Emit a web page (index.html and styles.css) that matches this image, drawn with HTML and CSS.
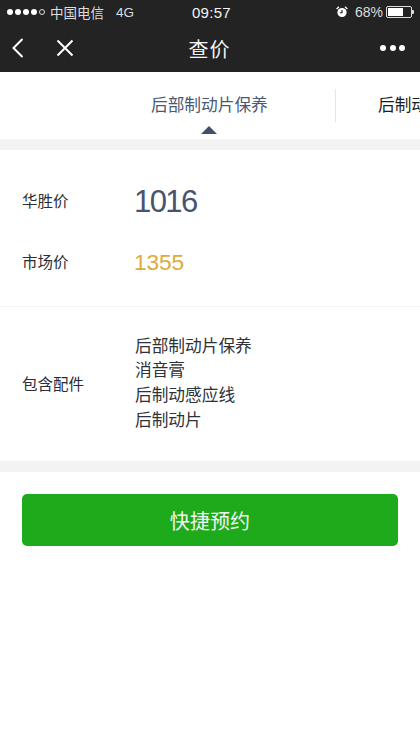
FILE: index.html
```html
<!DOCTYPE html>
<html lang="zh-CN">
<head>
<meta charset="utf-8">
<title>查价</title>
<link rel="stylesheet" href="styles.css">
</head>
<body>
<header class="top">
  <div class="status">
    <div class="status-left">
      <span class="signal"><i></i><i></i><i></i><i></i><i class="off"></i></span>
      <span class="carrier">中国电信</span>
      <span class="net">4G</span>
    </div>
    <div class="time">09:57</div>
    <div class="status-right">
      <svg class="alarm" width="12" height="12" viewBox="0 0 12 12"><circle cx="6" cy="6.5" r="4.6" fill="#fff"/><path d="M6 4v2.8H3.8" fill="none" stroke="#222" stroke-width="1.1"/><path d="M0.6 3 L3 0.8 M11.4 3 L9 0.8" stroke="#fff" stroke-width="1.3"/></svg>
      <span class="pct">68%</span>
      <span class="battery"><span class="battery-fill"></span></span><span class="battery-tip"></span>
    </div>
  </div>
  <nav class="nav">
    <div class="nav-left">
      <svg width="14" height="22" viewBox="0 0 14 22"><path d="M11.5 2 L2.5 11 L11.5 20" fill="none" stroke="#fff" stroke-width="2"/></svg>
      <svg width="20" height="20" viewBox="0 0 20 20"><path d="M2.5 2.5 L17.5 17.5 M17.5 2.5 L2.5 17.5" fill="none" stroke="#fff" stroke-width="2"/></svg>
    </div>
    <div class="nav-title">查价</div>
    <div class="dots"><i></i><i></i><i></i></div>
  </nav>
</header>
<div class="tabs">
  <div class="tab tab-active">后部制动片保养<span class="caret"></span></div>
  <div class="tab tab-next">后制动片</div>
</div>
<section class="prices">
  <div class="row"><div class="label">华胜价</div><div class="sale">1016</div></div>
  <div class="row"><div class="label">市场价</div><div class="market">1355</div></div>
</section>
<section class="parts">
  <div class="label">包含配件</div>
  <ul class="part-list">
    <li>后部制动片保养</li>
    <li>消音膏</li>
    <li>后制动感应线</li>
    <li>后制动片</li>
  </ul>
</section>
<div class="action"><button class="book">快捷预约</button></div>
</body>
</html>
```
FILE: styles.css
```css
* { box-sizing: border-box; }
html, body { margin: 0; padding: 0; background: #fff; }
body {
  width: 420px;
  height: 747px;
  overflow: hidden;
  font-family: "Liberation Sans", "Noto Sans CJK SC", sans-serif;
  color: #2b2f36;
}
.top { background: #232323; height: 72px; color: #fff; }
.status {
  height: 24px;
  padding: 0 6px 0 7px;
  display: grid;
  grid-template-columns: 1fr auto 1fr;
  align-items: center;
  font-size: 14px;
  color: #eee;
}
.status-left { display: flex; align-items: center; }
.signal { display: flex; gap: 2px; margin-right: 5px; }
.signal i { width: 6px; height: 6px; border-radius: 50%; background: #fff; display: block; }
.signal i.off { background: none; border: 1px solid #ddd; }
.carrier { font-size: 13.5px; color: #ddd; }
.net { margin-left: 12px; font-size: 13.5px; color: #ddd; }
.time { font-size: 15px; color: #f4f4f4; letter-spacing: 0.3px; margin-left: 2px; }
.status-right { display: flex; align-items: center; justify-content: flex-end; }
.alarm { margin-right: 7px; }
.pct { margin-right: 3px; font-size: 14px; color: #ddd; }
.battery { width: 26px; height: 12px; border: 1px solid #ddd; border-radius: 2px; padding: 1px; display: block; }
.battery-fill { display: block; width: 68%; height: 100%; background: #fff; }
.battery-tip { width: 2px; height: 4px; background: #ddd; border-radius: 0 1px 1px 0; }
.nav {
  height: 48px;
  padding: 0 15px 0 11px;
  display: grid;
  grid-template-columns: 1fr auto 1fr;
  align-items: center;
}
.nav-left { display: flex; align-items: center; gap: 30px; }
.nav-title { font-size: 20px; letter-spacing: 1px; color: #f2f2f2; margin-left: 3px; }
.dots { display: flex; justify-content: flex-end; gap: 3.5px; }
.dots i { width: 6px; height: 6px; border-radius: 50%; background: #fff; display: block; }
.tabs {
  display: flex;
  align-items: stretch;
  overflow: hidden;
  white-space: nowrap;
  font-size: 16.7px;
  background: #fff;
  padding-left: 126px;
  border-bottom: 11px solid #f3f3f3;
  height: 78px;
}
.tab { position: relative; padding-top: 20px; flex: none; }
.tab-active { width: 210px; text-align: left; padding-left: 25px; color: #4a5a73; }
.tab-active::after {
  content: "";
  position: absolute;
  right: 0;
  top: 17px;
  height: 33px;
  width: 1px;
  background: #e6e6e6;
}
.caret {
  position: absolute;
  left: 75px;
  bottom: 5px;
  width: 0;
  height: 0;
  border-left: 8px solid transparent;
  border-right: 8px solid transparent;
  border-bottom: 8px solid #42506a;
}
.tab-next { padding-left: 42px; color: #1c1c1c; }
.prices { height: 157px; padding: 20px 22px 0; border-bottom: 1px solid #f3f3f3; }
.row { display: flex; align-items: center; height: 61px; }
.label { width: 112px; flex: none; font-size: 15.5px; color: #2a2e35; margin-bottom: 2px; }
.sale { font-size: 31px; color: #46546f; letter-spacing: -1.6px; margin-top: 2px; }
.market { font-size: 22.7px; color: #dcac38; letter-spacing: -0.1px; margin-top: 2px; }
.parts {
  height: 154px;
  padding: 0 22px;
  display: flex;
  align-items: center;
}
.part-list { list-style: none; margin: 0 0 0 1px; padding: 0; font-size: 16.7px; line-height: 24.7px; color: #2e323a; }
.action { border-top: 11px solid #f3f3f3; padding: 22px 22px 0; }
.book {
  display: block;
  width: 100%;
  height: 52px;
  border: 0;
  border-radius: 5px;
  background: #1dab1c;
  color: #f4f4f4;
  font: inherit;
  font-size: 20px;
  letter-spacing: 0.1px;
}
```
